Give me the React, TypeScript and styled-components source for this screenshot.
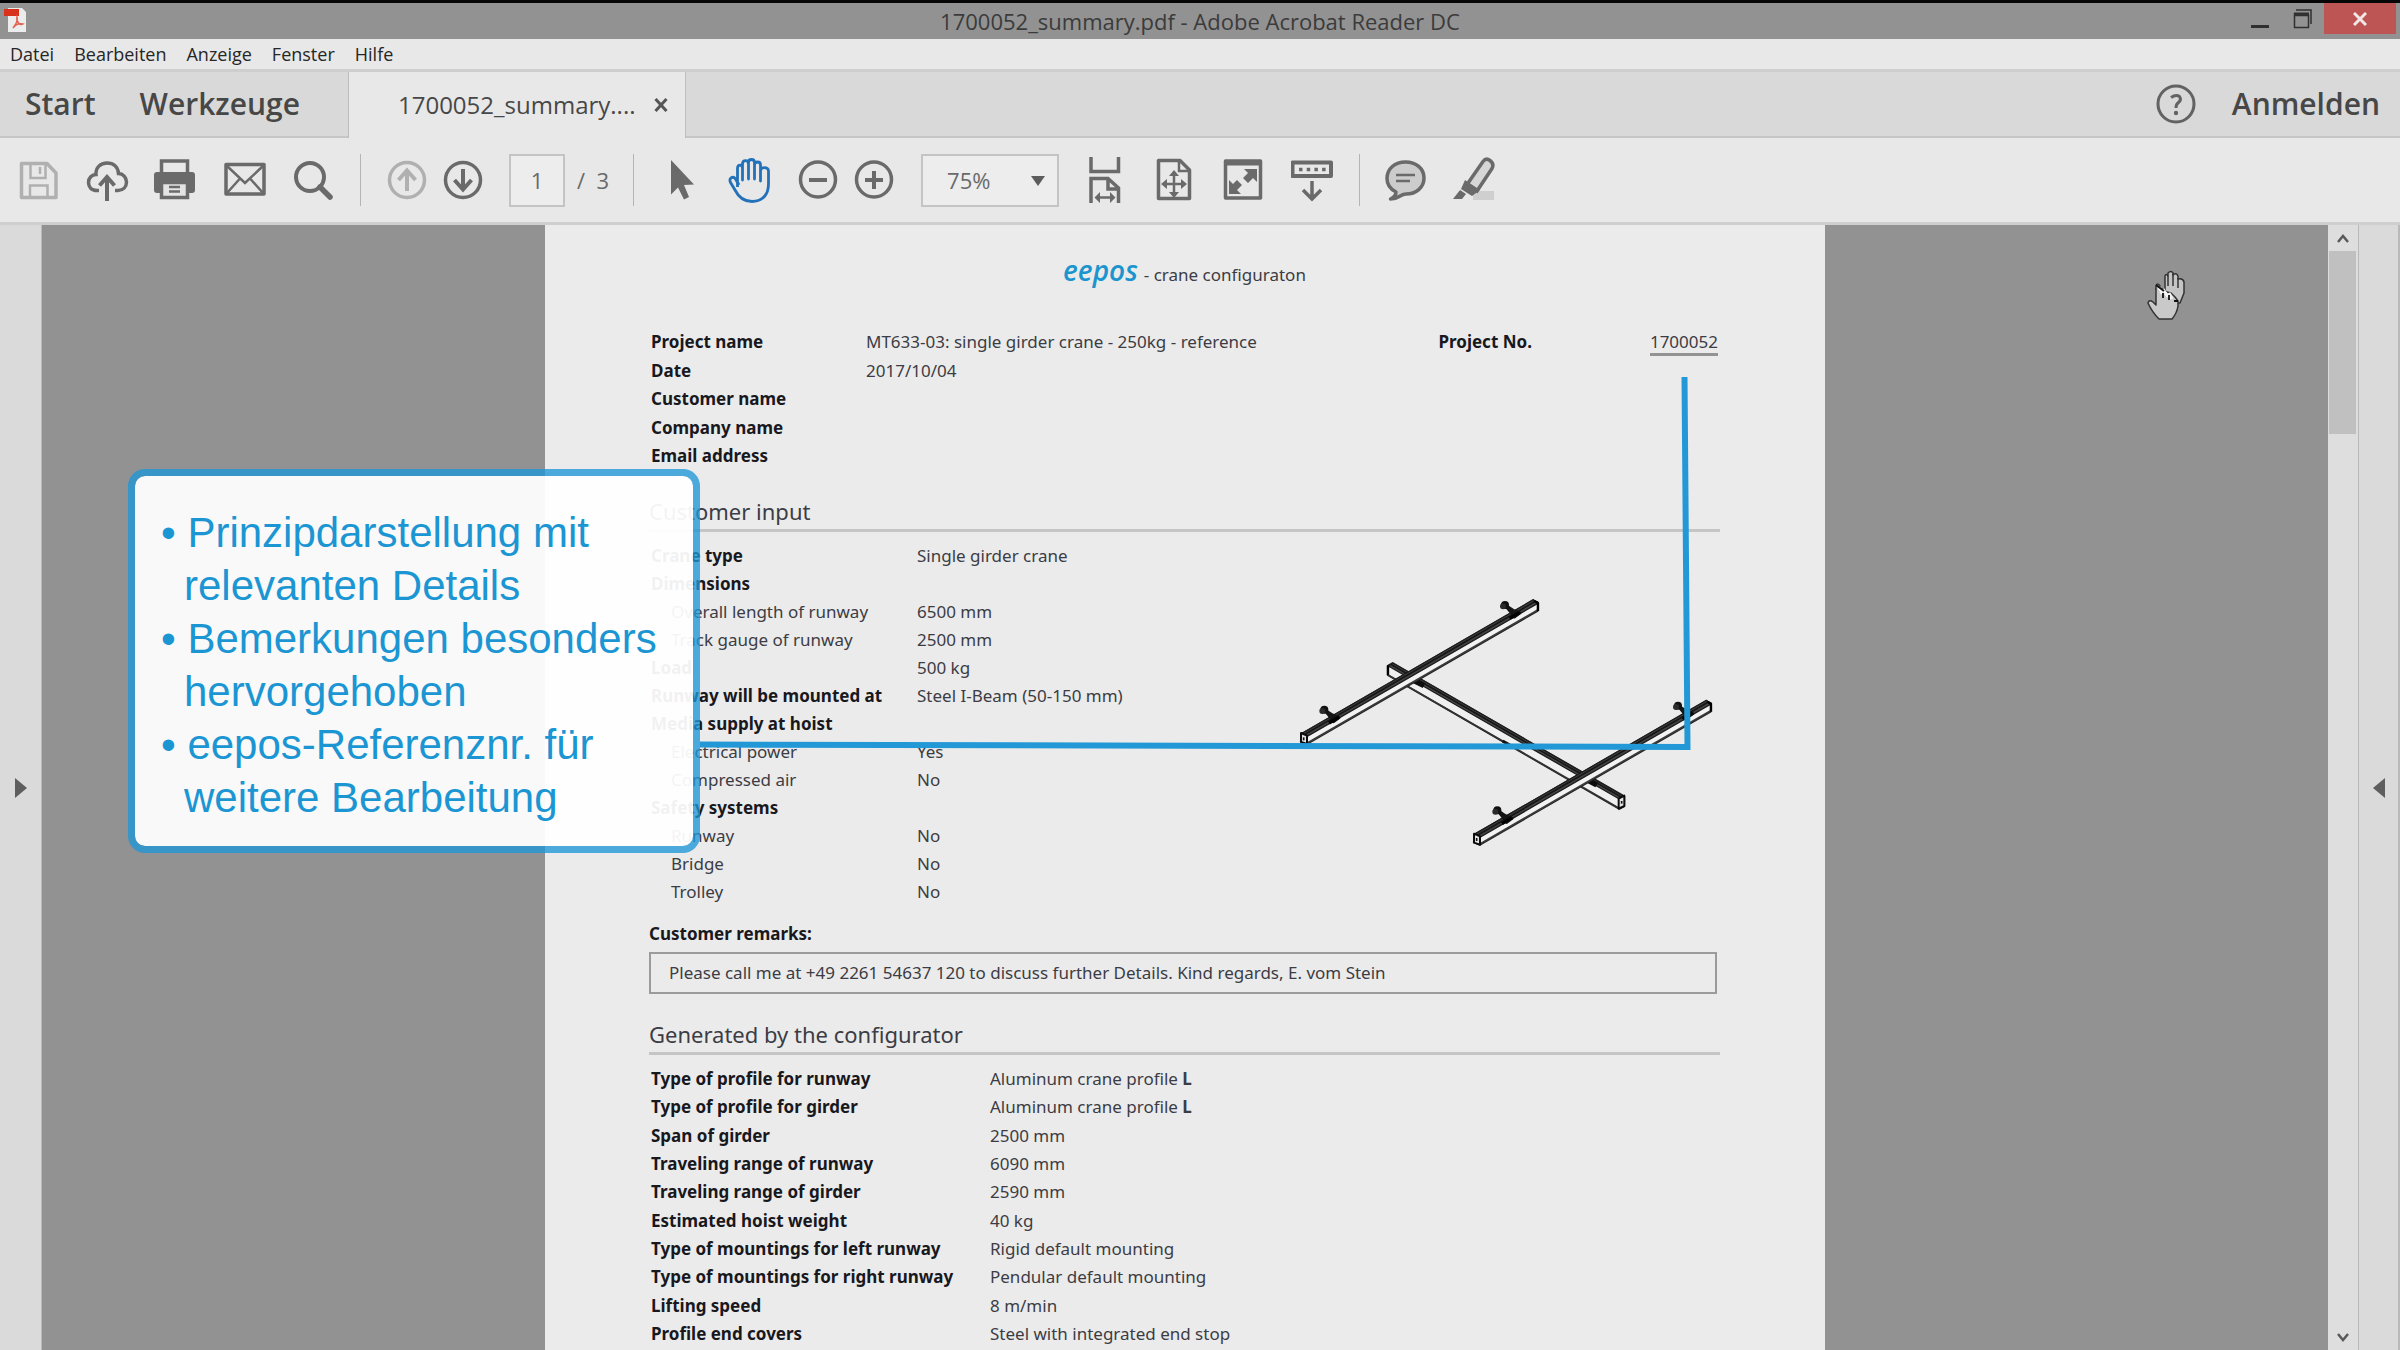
import React from 'react';
import styled, { createGlobalStyle, css } from 'styled-components';

const ui = '"Open Sans", "Noto Sans", sans-serif';
const docFont = '"Noto Sans", "Open Sans", sans-serif';

const GlobalStyle = createGlobalStyle`
  *, *::before, *::after { box-sizing: border-box; }
  body { margin: 0; background: #d9d9d9; font-family: ${ui}; }
  button, input, select { font: inherit; color: inherit; }
  table { border-collapse: collapse; }
`;

/* ---------- window frame ---------- */

const Window = styled.div`
  display: flex;
  flex-direction: column;
  height: 100vh;
  overflow: hidden;
  border-top: 3px solid #060606;
`;

const TitleBar = styled.header`
  display: grid;
  grid-template-columns: 1fr auto 1fr;
  align-items: start;
  flex: none;
  height: 36px;
  background: #929292;
  color: #3b3b3b;
`;

const AppIcon = styled.svg`
  display: block;
  margin: 4px 0 0 4px;
`;

const Title = styled.h1`
  margin: 0;
  font-size: 22px;
  font-weight: 400;
  line-height: 36px;
`;

const WindowControls = styled.div`
  display: flex;
  justify-content: flex-end;
  padding-right: 4px;
`;

const WindowButton = styled.button<{ $close?: boolean }>`
  display: grid;
  place-items: center;
  width: ${(p) => (p.$close ? 72 : 43)}px;
  height: 31px;
  padding: 0;
  border: 0;
  background: ${(p) => (p.$close ? '#be5555' : 'transparent')};
`;

const MenuBar = styled.nav`
  display: flex;
  flex: none;
  gap: 20px;
  height: 30px;
  padding: 0 10px;
  background: #e8e8e8;
  color: #262626;
`;

const MenuItem = styled.button`
  padding: 0;
  border: 0;
  background: none;
  font-size: 18px;
  line-height: 30px;
`;

/* ---------- tab strip ---------- */

const TabStrip = styled.div`
  display: flex;
  flex: none;
  height: 69px;
  border-top: 3px solid #cecece;
  background: #d9d9d9;
  color: #474747;
`;

const TabFiller = styled.div<{ $grow?: boolean }>`
  display: flex;
  align-items: center;
  justify-content: ${(p) => (p.$grow ? 'flex-end' : 'flex-start')};
  gap: ${(p) => (p.$grow ? 36 : 44)}px;
  flex: ${(p) => (p.$grow ? '1' : 'none')};
  padding: ${(p) => (p.$grow ? '0 20px' : '0 48px 0 25px')};
  border-bottom: 2px solid #c6c6c6;
`;

const StripButton = styled.button`
  padding: 0;
  border: 0;
  background: none;
  font-size: 30px;
  font-weight: 600;
  line-height: 40px;
`;

const IconOnly = styled.button`
  display: grid;
  place-items: center;
  padding: 0;
  border: 0;
  background: none;
`;

const Tab = styled.div`
  display: flex;
  align-items: center;
  gap: 18px;
  padding: 0 17px 0 49px;
  border: solid #bdbdbd;
  border-width: 0 1px;
  background: #e8e8e8;
`;

const TabLabel = styled.button`
  padding: 0;
  border: 0;
  background: none;
  font-size: 24px;
  line-height: 40px;
`;

/* ---------- toolbar ---------- */

const Toolbar = styled.div`
  display: flex;
  align-items: center;
  flex: none;
  height: 87px;
  padding: 0 16px;
  border-bottom: 3px solid #cfcfcf;
  background: #e8e8e8;
  color: #6a6a6a;
`;

const ToolGroup = styled.div<{ $tight?: boolean }>`
  display: flex;
  align-items: center;
  gap: ${(p) => (p.$tight ? 12 : 25)}px;
`;

const ToolButton = styled.button<{ $state?: 'active' | 'muted' }>`
  display: block;
  width: 44px;
  height: 48px;
  padding: 0;
  border: 0;
  background: none;
  ${(p) => p.$state === 'active' && css`color: #2372b9;`}
  ${(p) => p.$state === 'muted' && css`color: #b0b0b0;`}
`;

const Divider = styled.span`
  width: 1px;
  height: 52px;
  margin: 0 24px;
  background: #b4b4b4;
`;

const PageInput = styled.input`
  width: 56px;
  height: 53px;
  margin-left: 12px;
  border: 2px solid #c4c4c4;
  background: #ededed;
  font-size: 22px;
  text-align: center;
`;

const PageCount = styled.span`
  font-size: 22px;
  line-height: 40px;
  white-space: pre;
`;

const ZoomBox = styled.span`
  position: relative;
  display: block;
  width: 138px;
`;

const ZoomSelect = styled.select`
  display: block;
  width: 100%;
  height: 53px;
  padding: 0 24px;
  appearance: none;
  border: 2px solid #c4c4c4;
  border-radius: 0;
  background: #ededed;
  font-size: 22px;
`;

const ZoomArrow = styled.svg`
  position: absolute;
  top: 22px;
  right: 14px;
  pointer-events: none;
`;

/* ---------- work area ---------- */

const WorkArea = styled.div`
  display: flex;
  flex: 1;
  min-height: 0;
`;

const SidePanel = styled.aside<{ $side: 'left' | 'right' }>`
  display: grid;
  place-items: center;
  flex: none;
  width: 42px;
  border: solid #b9b9b9;
  border-width: ${(p) => (p.$side === 'right' ? '0 2px 0 1px' : '0 1px 0 0')};
  background: #dadada;
`;

const Viewer = styled.main`
  position: relative;
  display: flex;
  flex: 1;
  justify-content: center;
  min-width: 0;
  overflow: hidden;
  background: #929292;
`;

const ScrollTrack = styled.div`
  display: flex;
  flex-direction: column;
  flex: none;
  width: 30px;
  padding: 0 2px 0 1px;
  background: #dedede;
`;

const ScrollButton = styled.button`
  display: grid;
  place-items: center;
  height: 26px;
  padding: 0;
  border: 0;
  background: none;
`;

const ScrollThumb = styled.div`
  height: 183px;
  margin-bottom: auto;
  background: #c0c0c0;
`;

/* ---------- document ---------- */

const Page = styled.article`
  flex: none;
  width: 1280px;
  max-width: 100%;
  padding: 27px 105px 0 104px;
  background: #ebebeb;
  color: #3c3c44;
  font-family: ${docFont};
  font-size: 17px;
`;

const PageHeader = styled.header`
  display: flex;
  justify-content: center;
  align-items: baseline;
  gap: 6px;
  height: 76px;
  line-height: 36px;
`;

const Brand = styled.span`
  color: #1c95cf;
  font-family: ${ui};
  font-size: 28px;
  font-style: italic;
  font-weight: 600;
`;

const ProjectRow = styled.div`
  display: flex;
  justify-content: space-between;
  align-items: flex-start;
`;

const ProjectNumber = styled.dl`
  display: flex;
  gap: 118px;
  margin: 0;
  line-height: 28px;

  dt { color: #18181d; font-weight: 700; }
  dd { margin: 0 2px 0 0; height: 28px; border-bottom: 3px solid #939393; }
`;

const DataTable = styled.table<{ $label: number; $loose?: number }>`
  line-height: 28px;

  th, td { height: 28px; padding: 0; text-align: left; white-space: nowrap; }
  th { min-width: ${(p) => p.$label}px; padding-left: 2px; color: #18181d; font-weight: 700; }
  ${(p) =>
    p.$loose &&
    css`
      tr:nth-child(${p.$loose}n) > * { height: 29px; }
    `}
`;

const SubLabel = styled.th`
  && { padding-left: 22px; color: inherit; font-weight: 400; }
`;

const SectionTitle = styled.h2`
  margin: 0 0 10px;
  padding-bottom: 1px;
  border-bottom: 3px solid #c5c5c5;
  font-size: 22px;
  font-weight: 400;
  line-height: 33px;
`;

const Section = styled.section<{ $top: number }>`
  margin-top: ${(p) => p.$top}px;
`;

const InputGrid = styled.div`
  display: flex;
  justify-content: space-between;
  align-items: flex-start;
`;

const CraneDrawing = styled.svg`
  flex: none;
  margin-top: 54px;
`;

const RemarksTitle = styled.h3`
  margin: 14px 0 4px;
  color: #18181d;
  font-size: 17px;
  font-weight: 700;
  line-height: 28px;
`;

const Remarks = styled.p`
  margin: 0 3px 0 0;
  padding: 0 18px;
  border: 2px solid #9b9b9b;
  line-height: 38px;
`;

/* ---------- annotations over the document ---------- */

const Callout = styled.div`
  position: absolute;
  top: 244px;
  left: 86px;
  width: 572px;
  height: 384px;
  padding: 30px 16px 0 26px;
  border: 7px solid rgba(29, 150, 214, 0.78);
  border-radius: 17px;
  background: rgba(255, 255, 255, 0.94) padding-box;
  color: #1b96d3;
  font-family: "Liberation Sans", Arial, sans-serif;
  font-size: 42px;
  line-height: 53px;
`;

const CalloutList = styled.ul`
  margin: 0;
  padding: 0;
  list-style: none;
`;

const CalloutItem = styled.li`
  padding-left: 23px;
  text-indent: -23px;

  &::before { content: '• '; }
`;

const Leader = styled.svg`
  position: absolute;
  top: 0;
  left: 658px;
`;

const GrabCursor = styled.svg`
  position: absolute;
  top: 44px;
  right: 140px;
`;

/* ---------- icons ---------- */

const Icon = ({ children }: { children: React.ReactNode }) => (
  <svg width="44" height="48" viewBox="0 0 44 48" fill="none" stroke="currentColor" strokeWidth="3.5" aria-hidden="true">
    {children}
  </svg>
);

const icons: Record<string, React.ReactNode> = {
  save: (
    <>
      <path d="M5.500 7.500H31L40 17V41.500H5.500Z" strokeLinejoin="round" />
      <path d="M14.500 8V22H29.500V8M14 41V29.500H31.500V41" strokeWidth="2.500" />
      <path d="M24 11V18" strokeWidth="2.500" />
    </>
  ),
  upload: (
    <>
      <path d="M14 34.500H12C6.500 34.500 3.500 31 3.500 26.500C3.500 22 7 18.500 11 18.500C10.500 11.500 15.500 7 22 7C28.500 7 33 11 33.500 17.500C38 17.500 41.500 21.500 41.500 26C41.500 31 38 34.500 33 34.500H30" />
      <path d="M22 45V22M14.500 29.500L22 21L29.500 29.500" strokeWidth="4" />
    </>
  ),
  print: (
    <>
      <path d="M7.500 18V5H33.500V18" />
      <path d="M3 16H38Q41 16 41 19V34Q41 37 38 37H3Q0 37 0 34V19Q0 16 3 16Z" fill="currentColor" stroke="none" />
      <path d="M7.500 26.500H33.500V41.500H7.500Z" fill="#e3e3e3" />
      <path d="M15 31H26M15 35.500H26" strokeWidth="2.500" />
    </>
  ),
  mail: (
    <>
      <path d="M3 8.500H41V38H3Z" strokeLinejoin="round" />
      <path d="M4 10L22 27L40 10M4 37L17 22.500M40 37L27 22.500" strokeWidth="2.500" />
    </>
  ),
  search: (
    <>
      <circle cx="18" cy="21" r="14" strokeWidth="4" />
      <path d="M28 31L38 41" strokeWidth="5.500" strokeLinecap="round" />
    </>
  ),
  up: (
    <>
      <circle cx="22" cy="24" r="17.500" />
      <path d="M22 35V15M13.500 24L22 14.500L30.500 24" strokeWidth="4" />
    </>
  ),
  down: (
    <>
      <circle cx="22" cy="24" r="17.500" />
      <path d="M22 13V33M13.500 24L22 33.500L30.500 24" strokeWidth="4" />
    </>
  ),
  arrow: <path d="M13 4V38.500L20 31.500L26 43.500L31 41L26 29L36 28.500Z" fill="currentColor" stroke="none" />,
  hand: (
    <path
      d="M10.500 31V12.500C10.500 8 15.500 8 15.500 12.500V24V8C15.500 3.500 21.500 3.500 21.500 8V23V6.500C21.500 2.500 27.500 2.500 27.500 6.500V23V9C27.500 5 33.500 5 33.500 9V25V15C33.500 10.500 41.500 10.500 41.500 15V28C41.500 38 36 45.500 25 45.500C16 45.500 11 40 8 34L3.500 26.500C1.500 22 6 19.500 8.500 23L12 29"
      strokeWidth="2.800"
      strokeLinejoin="round"
    />
  ),
  minus: (
    <>
      <circle cx="22" cy="23.500" r="17.500" />
      <path d="M13 24H31" strokeWidth="4" />
    </>
  ),
  plus: (
    <>
      <circle cx="22" cy="23.500" r="17.500" />
      <path d="M13 24H31M22 15V33" strokeWidth="4" />
    </>
  ),
  fitWidth: (
    <>
      <path d="M7 1V15.500H34.500V1M7 47V22.500H24L34.500 32V47M24 23V33H34" />
      <path d="M13 41.500H29" strokeWidth="2.500" />
      <path d="M16 36L10.500 41.500L16 47ZM26 36L31.500 41.500L26 47Z" fill="currentColor" stroke="none" />
    </>
  ),
  fitPage: (
    <>
      <path d="M5.500 4.500H27L36.500 14V42.500H5.500Z" strokeLinejoin="round" />
      <path d="M26 5V15H36M21 18V38M11 28H31" strokeWidth="2.500" />
      <path d="M21 14L26 20H16ZM21 42L26 36H16ZM8 28L14 23V33ZM34 28L28 23V33Z" fill="currentColor" stroke="none" />
    </>
  ),
  fullScreen: (
    <>
      <path d="M3.500 5H38.500V42H3.500Z" strokeLinejoin="round" />
      <path d="M3 7.500H39" strokeWidth="4" />
      <path d="M22 13H35V26L31 22L26 27L21 22L26 17ZM7 24L11 28L15 24L20 29L15 34L19 38H7Z" fill="currentColor" stroke="none" />
    </>
  ),
  keyboard: (
    <>
      <path d="M1.500 6.500H40V20H1.500Z" strokeLinejoin="round" strokeWidth="4" />
      <path d="M8 13.500H35" strokeWidth="3.500" strokeDasharray="3.500 4.200" />
      <path d="M21 25V42M12 34L21 43L30 34" />
    </>
  ),
  comment: (
    <>
      <path d="M12 36C6 33 3 28 3 22.500C3 12.500 11 6 21.500 6C32 6 40 12.500 40 22C40 31.500 32 38 22 38C16 38 16 43 6.500 43C10.500 41 12 39 12 36Z" fill="#cccccc" strokeLinejoin="round" />
      <path d="M12 19H31M12 25H26" strokeWidth="2.500" />
    </>
  ),
  highlight: (
    <>
      <path d="M20 44V35H41V44Z" fill="#cfcfcf" stroke="none" />
      <path d="M13 30L30 5.500Q33 1.500 37 4.500Q41.500 8 39 12.500L23 36.500" fill="#d6d6d6" />
      <path d="M12 24L27 34L19 40L8 33ZM7 34L13 38L9 43H0Z" fill="currentColor" stroke="none" />
    </>
  ),
};

type ToolProps = { name: string; label: string; state?: 'active' | 'muted' };

const Tool = ({ name, label, state }: ToolProps) => (
  <ToolButton type="button" aria-label={label} $state={state}>
    <Icon>{icons[name]}</Icon>
  </ToolButton>
);

/* ---------- crane drawing ---------- */

const Hanger = ({ x, y }: { x: number; y: number }) => (
  <g transform={`translate(${x} ${y})`}>
    <path d="M0 0L24 16L44 24L28 36L18 22Z" fill="#151515" stroke="#151515" strokeWidth="9" strokeLinejoin="round" />
    <circle cx="0" cy="0" r="12" fill="#111" />
    <circle cx="-6" cy="4" r="9" fill="#2b2b2b" />
    <path d="M14 40L44 22" stroke="#000" strokeWidth="10" />
  </g>
);

const Rail = () => (
  <g strokeLinejoin="round">
    <path d="M125 518L820 118L833 124V150L140 550L122 542Z" fill="#f3f3f3" stroke="#222" strokeWidth="5" />
    <path d="M128 516L820 116L832 128L140 527Z" fill="#444" stroke="#1d1d1d" strokeWidth="4" />
    <path d="M136 519L826 121" stroke="#161616" strokeWidth="5" />
    <path d="M142 546L833 147" stroke="#3b3b3b" strokeWidth="5" />
    <path d="M823 120L834 126V150" fill="none" stroke="#000" strokeWidth="7" />
    <path d="M123 516L141 524V549L123 543Z" fill="#e5e5e5" stroke="#0c0c0c" strokeWidth="6" />
    <path d="M131 529V538" stroke="#111" strokeWidth="5" />
    <Hanger x={193} y={446} />
    <Hanger x={735} y={132} />
  </g>
);

const Girder = () => (
  <g strokeLinejoin="round">
    <path d="M383 314L398 306L1093 706V736L1078 744L383 342Z" fill="#f0f0f0" stroke="#222" strokeWidth="5" />
    <path d="M385 315L398 306L1092 706L1078 714Z" fill="#4a4a4a" stroke="#1d1d1d" strokeWidth="4" />
    <path d="M392 310L1085 709" stroke="#161616" strokeWidth="5" />
    <path d="M384 342L1076 741" stroke="#333" strokeWidth="5" />
    <path d="M384 314V342" stroke="#000" strokeWidth="7" />
    <path d="M1076 713L1093 704V735L1076 743Z" fill="#e5e5e5" stroke="#0c0c0c" strokeWidth="6" />
    <path d="M1085 720V728" stroke="#111" strokeWidth="5" />
    <path d="M728 540L752 554" stroke="#111" strokeWidth="9" />
    <path d="M460 358L492 374M980 656L1010 672" stroke="#0d0d0d" strokeWidth="16" />
  </g>
);

/* ---------- data ---------- */

const projectRows = [
  ['Project name', 'MT633-03: single girder crane - 250kg - reference'],
  ['Date', '2017/10/04'],
  ['Customer name', ''],
  ['Company name', ''],
  ['Email address', ''],
];

const inputRows: { label: string; value?: string; sub?: boolean }[] = [
  { label: 'Crane type', value: 'Single girder crane' },
  { label: 'Dimensions' },
  { label: 'Overall length of runway', value: '6500 mm', sub: true },
  { label: 'Track gauge of runway', value: '2500 mm', sub: true },
  { label: 'Load', value: '500 kg' },
  { label: 'Runway will be mounted at', value: 'Steel I-Beam (50-150 mm)' },
  { label: 'Media supply at hoist' },
  { label: 'Electrical power', value: 'Yes', sub: true },
  { label: 'Compressed air', value: 'No', sub: true },
  { label: 'Safety systems' },
  { label: 'Runway', value: 'No', sub: true },
  { label: 'Bridge', value: 'No', sub: true },
  { label: 'Trolley', value: 'No', sub: true },
];

const generatedRows: [string, string, string?][] = [
  ['Type of profile for runway', 'Aluminum crane profile ', 'L'],
  ['Type of profile for girder', 'Aluminum crane profile ', 'L'],
  ['Span of girder', '2500 mm'],
  ['Traveling range of runway', '6090 mm'],
  ['Traveling range of girder', '2590 mm'],
  ['Estimated hoist weight', '40 kg'],
  ['Type of mountings for left runway', 'Rigid default mounting'],
  ['Type of mountings for right runway', 'Pendular default mounting'],
  ['Lifting speed', '8 m/min'],
  ['Profile end covers', 'Steel with integrated end stop'],
];

const notes = [
  'Prinzipdarstellung mit relevanten Details',
  'Bemerkungen besonders hervorgehoben',
  'eepos-Referenznr. für weitere Bearbeitung',
];

export default function App() {
  return (
    <>
      <GlobalStyle />
      <Window>
        <TitleBar>
          <AppIcon width="24" height="26" viewBox="0 0 24 26" aria-hidden="true">
            <path d="M4 1H18L22 5V25H4Z" fill="#ececec" />
            <path d="M0 2H15V9H0Z" fill="#d9321c" />
            <path d="M9 21C13 16 14 13 13 10C12 15 16 19 19 17C15 16 11 18 9 21" fill="none" stroke="#e0624f" strokeWidth="1.500" />
          </AppIcon>
          <Title>1700052_summary.pdf - Adobe Acrobat Reader DC</Title>
          <WindowControls>
            <WindowButton type="button" aria-label="Minimieren">
              <svg width="20" height="22" viewBox="0 0 20 22"><path d="M1 18.500H19" stroke="#303030" strokeWidth="3" /></svg>
            </WindowButton>
            <WindowButton type="button" aria-label="Wiederherstellen">
              <svg width="20" height="22" viewBox="0 0 20 22" fill="none" stroke="#303030">
                <path d="M3 2H18V16M1 7.500H15.500V19.500H1.500V5" strokeWidth="1.500" />
                <path d="M1 6H16" strokeWidth="3" />
              </svg>
            </WindowButton>
            <WindowButton type="button" aria-label="Schließen" $close>
              <svg width="14" height="14" viewBox="0 0 14 14"><path d="M1 1L13 13M13 1L1 13" stroke="#f2e6e6" strokeWidth="3" /></svg>
            </WindowButton>
          </WindowControls>
        </TitleBar>

        <MenuBar>
          {['Datei', 'Bearbeiten', 'Anzeige', 'Fenster', 'Hilfe'].map((m) => (
            <MenuItem type="button" key={m}>{m}</MenuItem>
          ))}
        </MenuBar>

        <TabStrip>
          <TabFiller>
            <StripButton type="button">Start</StripButton>
            <StripButton type="button">Werkzeuge</StripButton>
          </TabFiller>
          <Tab>
            <TabLabel type="button">1700052_summary....</TabLabel>
            <IconOnly type="button" aria-label="Tab schließen">
              <svg width="14" height="14" viewBox="0 0 14 14"><path d="M1.500 1L12.500 13M12.500 1L1.500 13" stroke="#555" strokeWidth="3" /></svg>
            </IconOnly>
          </Tab>
          <TabFiller $grow>
            <IconOnly type="button" aria-label="Hilfe">
              <svg width="40" height="40" viewBox="0 0 40 40">
                <circle cx="20" cy="20" r="18" fill="none" stroke="#626262" strokeWidth="3" />
                <path d="M15 13.500Q20 10 23.500 12.500Q26 16 22 19Q20 20.500 20 24" fill="none" stroke="#626262" strokeWidth="3" />
                <circle cx="20" cy="29" r="2.200" fill="#626262" />
              </svg>
            </IconOnly>
            <StripButton type="button">Anmelden</StripButton>
          </TabFiller>
        </TabStrip>

        <Toolbar>
          <ToolGroup>
            <Tool name="save" label="Speichern" state="muted" />
            <Tool name="upload" label="Hochladen" />
            <Tool name="print" label="Drucken" />
            <Tool name="mail" label="Senden" />
            <Tool name="search" label="Suchen" />
          </ToolGroup>
          <Divider />
          <ToolGroup $tight>
            <Tool name="up" label="Vorherige Seite" state="muted" />
            <Tool name="down" label="Nächste Seite" />
            <PageInput aria-label="Seite" defaultValue="1" />
            <PageCount>/  3</PageCount>
          </ToolGroup>
          <Divider />
          <ToolGroup>
            <Tool name="arrow" label="Auswahl" />
            <Tool name="hand" label="Hand" state="active" />
            <ToolGroup $tight>
              <Tool name="minus" label="Verkleinern" />
              <Tool name="plus" label="Vergrößern" />
            </ToolGroup>
            <ZoomBox>
              <ZoomSelect aria-label="Zoom" defaultValue="75%">
                <option>75%</option>
              </ZoomSelect>
              <ZoomArrow width="14" height="11" viewBox="0 0 14 11"><path d="M0 0H14L7 10Z" fill="#5c5c5c" /></ZoomArrow>
            </ZoomBox>
            <Tool name="fitWidth" label="Seitenbreite" />
            <Tool name="fitPage" label="Ganze Seite" />
            <Tool name="fullScreen" label="Vollbild" />
            <Tool name="keyboard" label="Werkzeugleiste" />
          </ToolGroup>
          <Divider />
          <ToolGroup>
            <Tool name="comment" label="Kommentar" />
            <Tool name="highlight" label="Markieren" />
          </ToolGroup>
        </Toolbar>

        <WorkArea>
          <SidePanel $side="left">
            <IconOnly type="button" aria-label="Navigation öffnen">
              <svg width="12" height="20" viewBox="0 0 12 20"><path d="M0 0L12 10L0 20Z" fill="#5e5e5e" /></svg>
            </IconOnly>
          </SidePanel>

          <Viewer>
            <Page>
              <PageHeader>
                <Brand>eepos</Brand>
                <span>- crane configuraton</span>
              </PageHeader>

              <ProjectRow>
                <DataTable $label={217} $loose={2}>
                  <tbody>
                    {projectRows.map(([label, value]) => (
                      <tr key={label}>
                        <th scope="row">{label}</th>
                        <td>{value}</td>
                      </tr>
                    ))}
                  </tbody>
                </DataTable>
                <ProjectNumber>
                  <dt>Project No.</dt>
                  <dd>1700052</dd>
                </ProjectNumber>
              </ProjectRow>

              <Section $top={25}>
                <SectionTitle>Customer input</SectionTitle>
                <InputGrid>
                  <DataTable $label={268}>
                    <tbody>
                      {inputRows.map(({ label, value, sub }, i) => (
                        <tr key={i}>
                          {sub ? <SubLabel scope="row">{label}</SubLabel> : <th scope="row">{label}</th>}
                          <td>{value}</td>
                        </tr>
                      ))}
                    </tbody>
                  </DataTable>
                  <CraneDrawing width="425" height="255" viewBox="105 105 1275 765" role="img" aria-label="Single girder crane">
                    <Girder />
                    <Rail />
                    <g transform="translate(519 302)"><Rail /></g>
                  </CraneDrawing>
                </InputGrid>
                <RemarksTitle>Customer remarks:</RemarksTitle>
                <Remarks>Please call me at +49 2261 54637 120 to discuss further Details. Kind regards, E. vom Stein</Remarks>
              </Section>

              <Section $top={24}>
                <SectionTitle>Generated by the configurator</SectionTitle>
                <DataTable $label={341} $loose={3}>
                  <tbody>
                    {generatedRows.map(([label, value, size]) => (
                      <tr key={label}>
                        <th scope="row">{label}</th>
                        <td>{value}{size && <b>{size}</b>}</td>
                      </tr>
                    ))}
                  </tbody>
                </DataTable>
              </Section>
            </Page>

            <Leader width="1000" height="530" viewBox="0 0 1000 530" fill="none" aria-hidden="true">
              <path d="M0 519.500L987.500 522L984.500 152" stroke="#2398d6" strokeWidth="6" />
            </Leader>

            <Callout>
              <CalloutList>
                {notes.map((n) => <CalloutItem key={n}>{n}</CalloutItem>)}
              </CalloutList>
            </Callout>

            <GrabCursor width="42" height="54" viewBox="0 0 42 54" strokeLinejoin="round" aria-hidden="true">
              <path d="M14 22L19 22V7Q20 4 22 7V4Q25 1 27 4V6Q30 3 32 7V10Q37 9 38 13V24L34 34H18L10 20Z" fill="#c4c4c4" stroke="#333" strokeWidth="1.500" />
              <path d="M22 7V17M27 5V17M32 9V19" stroke="#333" strokeWidth="1.500" />
              <path d="M10 35V17Q11 13 14 17V22L17 20L21 23L25 24L29 28L32 32V37Q31 44 26 50H13Q6 43 2 34Q3 30 7 33L10 36Z" fill="#c9c9c9" stroke="#333" strokeWidth="1.500" />
              <path d="M13 18L16 25M17 20L22 28M23 24L26 30" stroke="#f4f4f4" strokeWidth="3" />
              <path d="M10 16L18 22M17 24V29M23 26V31M28 32H32" stroke="#111" strokeWidth="1.800" />
            </GrabCursor>
          </Viewer>

          <ScrollTrack>
            <ScrollButton type="button" aria-label="Nach oben">
              <svg width="12" height="10" viewBox="0 0 12 10"><path d="M1 9L6 3L11 9" fill="none" stroke="#5a5a5a" strokeWidth="2.500" /></svg>
            </ScrollButton>
            <ScrollThumb />
            <ScrollButton type="button" aria-label="Nach unten">
              <svg width="12" height="10" viewBox="0 0 12 10"><path d="M1 2L6 8L11 2" fill="none" stroke="#5a5a5a" strokeWidth="2.500" /></svg>
            </ScrollButton>
          </ScrollTrack>

          <SidePanel $side="right">
            <IconOnly type="button" aria-label="Werkzeuge öffnen">
              <svg width="12" height="20" viewBox="0 0 12 20"><path d="M12 0L0 10L12 20Z" fill="#5e5e5e" /></svg>
            </IconOnly>
          </SidePanel>
        </WorkArea>
      </Window>
    </>
  );
}
